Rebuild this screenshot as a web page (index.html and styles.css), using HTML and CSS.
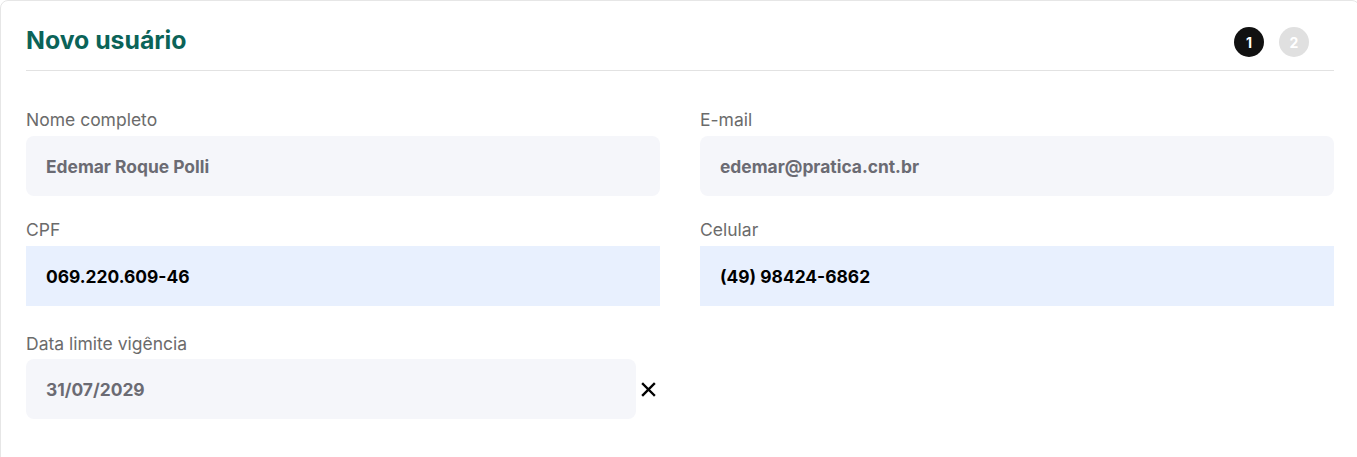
FILE: index.html
```html
<!DOCTYPE html>
<html lang="pt-BR">
<head>
<meta charset="utf-8">
<title>Novo usuário</title>
<link rel="stylesheet" href="styles.css">
</head>
<body>
<section class="card">
  <header class="card-header">
    <h1 class="title">Novo usuário</h1>
    <div class="steps">
      <span class="step step-active">1</span>
      <span class="step">2</span>
    </div>
  </header>
  <form class="form">
    <div class="field">
      <label class="label">Nome completo</label>
      <div class="input input-disabled">Edemar Roque Polli</div>
    </div>
    <div class="field">
      <label class="label">E-mail</label>
      <div class="input input-disabled">edemar@pratica.cnt.br</div>
    </div>
    <div class="field">
      <label class="label">CPF</label>
      <div class="input input-filled">069.220.609-46</div>
    </div>
    <div class="field">
      <label class="label">Celular</label>
      <div class="input input-filled">(49) 98424-6862</div>
    </div>
    <div class="field field-date">
      <label class="label">Data limite vigência</label>
      <div class="date-row">
        <div class="input input-disabled">31/07/2029</div>
        <button type="button" class="clear" aria-label="Limpar">
          <svg width="15" height="15" viewBox="0 0 15 15"><path d="M2 2 L13 13 M13 2 L2 13" stroke="#000" stroke-width="2.4" stroke-linecap="square" fill="none"/></svg>
        </button>
      </div>
    </div>
  </form>
</section>
</body>
</html>
```
FILE: styles.css
```css
html, body {
  margin: 0;
  padding: 0;
  background: #ffffff;
  overflow: hidden;
}
body {
  font-family: Inter, "Noto Sans", sans-serif;
}
.card {
  box-sizing: border-box;
  width: 1360px;
  min-height: 470px;
  border: 1px solid #e6e6e6;
  border-radius: 8px;
  padding: 23px 25px 24px 25px;
  background: #fff;
}
.card-header {
  display: flex;
  justify-content: space-between;
  align-items: flex-start;
  padding-bottom: 13px;
  border-bottom: 1px solid #e2e2e2;
}
.title {
  margin: 0;
  font-size: 24.8px;
  line-height: 33px;
  font-weight: 700;
  color: #0b6358;
}
.steps {
  display: flex;
  gap: 15px;
  margin-top: 3px;
  margin-right: 25px;
}
.step {
  width: 30px;
  height: 30px;
  border-radius: 50%;
  background: #e0e0e0;
  color: #fff;
  font-size: 14px;
  font-weight: 700;
  display: flex;
  align-items: center;
  justify-content: center;
}
.step-active {
  background: #111111;
}
.form {
  display: grid;
  grid-template-columns: 1fr 1fr;
  column-gap: 40px;
  row-gap: 22px;
  padding-top: 37px;
}
.field {
  display: flex;
  flex-direction: column;
  gap: 4px;
}
.field-date {
  padding-top: 4px;
  gap: 3px;
}
.label {
  font-size: 17.5px;
  line-height: 24px;
  color: #6b6b6b;
}
.input {
  box-sizing: border-box;
  height: 60px;
  display: flex;
  align-items: center;
  padding: 0 20px;
  font-size: 17.4px;
  font-weight: 700;
  border-radius: 8px;
}
.input-disabled {
  background: #f5f6fa;
  color: #6b6b73;
}
.input-filled {
  background: #e8f0fe;
  color: #000;
  border-radius: 0;
}
.date-row {
  display: flex;
  align-items: center;
}
.date-row .input {
  flex: 1;
}
.clear {
  width: 24px;
  height: 24px;
  padding: 0;
  border: 0;
  background: transparent;
  display: flex;
  align-items: center;
  justify-content: center;
  margin-left: 0;
}
```
